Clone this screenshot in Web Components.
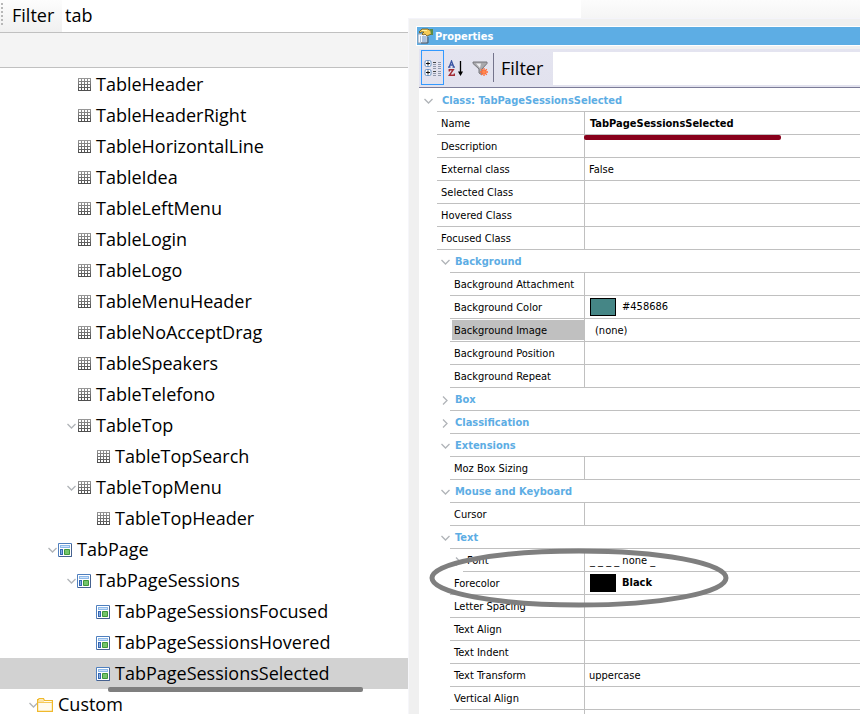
<!DOCTYPE html>
<html lang="en">
<head>
<meta charset="utf-8">
<title>Class Properties</title>
<style>
html, body { margin: 0; height: 100%; background: #fff; color: #000; }
body { font-family: "Open Sans", "Noto Sans", sans-serif; font-size: 18px; overflow: hidden; }
</style>
</head>
<body>
<app-shell>
  <class-tree slot="left"></class-tree>
  <property-panel slot="right" heading="Properties"></property-panel>
</app-shell>

<template id="t-shell">
  <style>
    :host { display: grid; grid-template-columns: minmax(0, 408fr) minmax(0, 452fr); height: 100vh; overflow: hidden; }
    .right { display: flex; flex-direction: column; min-width: 0; min-height: 0; }
    .left { min-width: 0; min-height: 0; overflow: hidden; }
    .strip { display: grid; grid-template-columns: 173fr 279fr; height: 18px; flex: none; }
    .strip i:last-child { background: linear-gradient(#fcfcfc, #f5f5f5); }
    ::slotted([slot=right]) { flex: 1; }
  </style>
  <div class="left"><slot name="left"></slot></div>
  <div class="right"><div class="strip"><i></i><i></i></div><slot name="right"></slot></div>
</template>

<template id="t-tree">
  <style>
    :host { display: block; }
    .bar { display: flex; height: 32px; border-bottom: 1px solid #c0c0c0; }
    .lab { box-sizing: border-box; width: 62px; display: flex; align-items: center; gap: 9px; padding: 0 0 2px 1px; background: linear-gradient(#fdfdfd, #f0f0f0); }
    .grip { width: 2px; height: 22px; margin-bottom: 2px; background: repeating-linear-gradient(#b8b8b8 0 2px, transparent 2px 4px); }
    input { flex: 1; min-width: 0; border: 0; outline: 0; padding: 0 0 2px 3px; margin: 0; font: inherit; color: #000; background: #fff; }
    .band { height: 34px; background: #f4f4f4; border-bottom: 1px solid #c0c0c0; }
    .rows { padding-top: 1px; }
  </style>
  <div class="bar">
    <label class="lab" for="f"><span class="grip"></span>Filter</label>
    <input id="f" type="text" value="tab">
  </div>
  <div class="band"></div>
  <div class="rows" role="tree" aria-label="Classes"></div>
</template>

<template id="t-item">
  <style>
    :host { display: flex; align-items: center; position: relative; height: 31px; white-space: nowrap; }
    :host([selected]) { background: #d2d2d2; }
    button { width: 9px; height: 15px; margin-right: 1px; padding: 0; border: 0; background: none; display: flex; align-items: center; flex: none; }
    button[hidden] { display: flex; visibility: hidden; }
    .ico { display: flex; width: 14px; margin-right: 5px; flex: none; justify-content: flex-end; }
    .txt { line-height: 20px; margin-bottom: 2px; }
    svg { display: block; flex: none; }
    .mark { position: absolute; left: 108px; bottom: -3px; width: 255px; height: 5px; border-radius: 2px; background: #7f7f7f; z-index: 1; }
  </style>
  <button type="button" aria-label="Collapse"><svg width="9" height="6"><path d="M.5 1l4 4 4-4" fill="none" stroke="#b0b4b8" stroke-width="1.3"/></svg></button>
  <span class="ico"></span><span class="txt"><slot></slot></span>
</template>

<template id="t-panel">
  <style>
    :host { display: flex; flex-direction: column; position: relative; min-height: 0; box-sizing: border-box; background: #f0f0f0; border-left: 1px solid #f6f6fa; border-top: 1px solid #f4f4fa; padding: 7px 0 0 7px; font: 11px "DejaVu Sans Condensed", "DejaVu Sans", sans-serif; overflow: hidden; }
    .title { display: flex; align-items: center; gap: 2px; height: 18px; flex: none; background: #5dade4; border: solid #fff; border-width: 1px 0 1px 1px; margin-bottom: 3px; color: #fff; font-weight: bold; }
    h2 { font: inherit; margin: 0; }
    .body { flex: 1; min-height: 0; margin-left: 3px; background: #fff; overflow: hidden; }
    .tools { box-sizing: border-box; display: flex; height: 39px; padding: 1px 0 2px 2px; background: linear-gradient(#e4e4f0, #e2e2ee); border-bottom: 1px solid #7c7c98; }
    .tools button { box-sizing: border-box; width: 23px; padding: 2px 0 0; border: 1px solid transparent; background: none; display: flex; align-items: center; justify-content: center; flex: none; margin-right: 1px; }
    .tools button[aria-pressed=true] { border-color: #3399ff; }
    .sep { width: 1px; background: #74748c; margin: 3px 7px 3px 0; }
    .tools label { font: 18px "Open Sans", "Noto Sans", sans-serif; align-self: center; width: 52px; }
    input { flex: 1; min-width: 0; border: 0; outline: 0; padding: 0 4px; margin: 2px 0 0; background: #fff; }
    table { width: 100%; border-collapse: separate; border-spacing: 0; table-layout: fixed; margin-top: 1px; }
    col.a { width: 18px; } col.b { width: 13px; } col.n { width: 121px; }
    th, td { height: 20px; padding: 2px 0 0; text-align: left; font-weight: normal; border-bottom: 1px solid #c0c0c0; white-space: nowrap; line-height: 20px; }
    th { line-height: 20px; }
    .g { border-bottom-color: transparent; }
    .g button { display: flex; align-items: center; justify-content: center; width: 10px; height: 20px; padding: 0; margin: 0 0 0 auto; border: 0; background: none; }
    tr.top .g button { margin-right: 4px; }
    .k { padding-left: 4px; }
    th.sec { font-weight: bold; color: #5dade4; padding-left: 5px; }
    td.v { border-left: 1px solid #c0c0c0; padding-left: 4px; position: relative; }
    tr.sel .k { background: linear-gradient(#c0c0c0, #c0c0c0) 2px 1px / 100% 20px no-repeat; }
    .v.in { padding-left: 10px; }
    .v.b { font-weight: bold; padding-left: 5px; }
    .v.sw { padding-left: 5px; }
    .fill { display: flex; align-items: center; gap: 6px; height: 20px; margin-top: -2px; }
    .chip { box-sizing: border-box; width: 26px; height: 18px; border: 1px solid #000; }
    .red { position: absolute; left: -1px; bottom: -6px; width: 197px; height: 5px; border-radius: 2px; background: #88001b; z-index: 1; }
    .ring { position: absolute; left: -155px; top: -24px; z-index: 2; pointer-events: none; overflow: visible; }
    svg { display: block; }
  </style>
  <div class="title">
    <svg width="16" height="16" viewBox="0 0 16 16"><path d="M1 6h9v9H1z" fill="#f4f7fb" stroke="#8a9cb4"/><path d="M3 9h1M5 9h4M3 11h1M5 11h4M3 13h1M5 13h4" stroke="#5b87bd"/><path d="M2 4l3-3h6l1 1h3v4l-3 1-2 1-2-2-2 1-1-1 2-2H4L3 5z" fill="#f6cc55" stroke="#6f5518" stroke-width=".8"/><path d="M5 2.500h5" stroke="#fff0a0"/><path d="M13 1h3v6h-2z" fill="#5a8c46"/><path d="M11 9v6H4" fill="none" stroke="#4e5a68"/></svg>
    <h2></h2>
  </div>
  <div class="body">
    <div class="tools">
      <button type="button" aria-label="Categorized" aria-pressed="true"><svg width="17" height="17" viewBox="0 0 17 17" fill="none"><rect x="1" y=".5" width="6" height="6" rx="1.500" fill="#fff" stroke="#6c95c4"/><path d="M2 3.500h4M4 1.500v4" stroke="#111"/><rect x="1" y="9.500" width="6" height="6" rx="1.500" fill="#fff" stroke="#6c95c4"/><path d="M2 12.500h4M4 10.500v4" stroke="#111"/><path d="M9 2.500h3M9 11.500h3" stroke="#444"/><path d="M9 4.500h3M9 6.500h3M9 8.500h3M9 13.500h3M9 15.500h3M14 2.500h3M14 4.500h3M14 6.500h3M14 8.500h3M14 11.500h3M14 13.500h3M14 15.500h3" stroke="#8f98ab"/></svg></button>
      <button type="button" aria-label="Alphabetical"><svg width="17" height="17" viewBox="0 0 17 17" fill="none"><path d="M0 7.200h2.500M4.500 7.200H7M1.200 7L3.500 1l2.300 6M2 5h3" stroke="#3a55a4" stroke-width="1.300"/><path d="M1.300 11.500V9.700h4L1.300 15.300h5v-1.800" stroke="#a32c34" stroke-width="1.400"/><path d="M12.500 1v13" stroke="#000" stroke-width="1.300"/><path d="M10 11.500h5L12.500 16z" fill="#000"/></svg></button>
      <button type="button" aria-label="Clear filter"><svg width="17" height="17" viewBox="0 0 17 17"><path d="M1 2h14v1.500L10 9v6l-3-2V9L1 3.500z" fill="#a9a9ad" stroke="#77777c"/><path d="M4 3.500h5L8 8z" fill="#ececf0"/><path d="M12 8v8M8 12h8M9.200 9.200l5.600 5.600M14.800 9.200l-5.600 5.600" stroke="#ff6a36" stroke-width="1.300"/><circle cx="12" cy="12" r="1.700" fill="#ff8a50"/></svg></button>
      <span class="sep"></span>
      <label for="pf">Filter</label><input id="pf" type="text">
    </div>
    <table aria-label="Class properties"><colgroup><col class="a"><col class="b"><col class="b"><col class="n"><col></colgroup><tbody></tbody></table>
  </div>
</template>

<script>
const stamp = (el, id) => {
  const root = el.attachShadow({ mode: 'open' });
  root.append(document.getElementById(id).content.cloneNode(true));
  return root;
};

const GRID = '<svg width="13" height="13" viewBox="0 0 13 13"><defs><linearGradient id="g" x2="0" y2="1"><stop stop-color="#999"/><stop offset="1" stop-color="#4c4c4c"/></linearGradient></defs><path fill="url(#g)" fill-rule="evenodd" d="M0 0h13v13H0z' +
  [1, 4, 7, 10].flatMap(y => [1, 4, 7, 10].map(x => `M${x} ${y}h2v2h-2z`)).join('') + '"/></svg>';
const ICONS = {
  table: GRID,
  page: '<svg width="14" height="14" viewBox="0 0 14 14"><path d="M.5.5h13v13H.5z" fill="#fff" stroke="#4f7fbe"/><path d="M1 13.500h12.500V1" fill="none" stroke="#46618f"/><path d="M2 2h10v3H2z" fill="#8db9ea"/><path d="M3 3.500h8" stroke="#cfe3fa"/><path d="M2 6h3v6H2z" fill="#3465b0"/><path d="M3.500 7v4" stroke="#86aee4"/><path d="M6.500 6.500h5v5h-5z" fill="#74c46a" stroke="#3d963b"/></svg>',
  folder: '<svg width="16" height="14" viewBox="0 0 16 14"><path d="M.6 13.400V1.500h1L2 .600h4.500l1 1.900h7.900v10.900z" fill="#fffbee" stroke="#f0b92c" stroke-width="1.200"/><path d="M1 4.500h14M1 3h6" stroke="#f6ca58"/></svg>'
};

customElements.define('app-shell', class extends HTMLElement {
  constructor() { super(); stamp(this, 't-shell'); }
});

customElements.define('tree-item', class extends HTMLElement {
  connectedCallback() {
    if (this.shadowRoot) return;
    const root = stamp(this, 't-item');
    this.setAttribute('role', 'treeitem');
    this.style.paddingLeft = 10 + 19 * Number(this.getAttribute('level')) + 'px';
    root.querySelector('button').hidden = !this.hasAttribute('open');
    root.querySelector('.ico').innerHTML = ICONS[this.getAttribute('icon')];
    if (this.hasAttribute('selected')) {
      const m = document.createElement('span');
      m.className = 'mark';
      root.append(m);
    }
  }
});

const TREE = [
  [3, 'table', 'TableHeader'], [3, 'table', 'TableHeaderRight'], [3, 'table', 'TableHorizontalLine'],
  [3, 'table', 'TableIdea'], [3, 'table', 'TableLeftMenu'], [3, 'table', 'TableLogin'], [3, 'table', 'TableLogo'],
  [3, 'table', 'TableMenuHeader'], [3, 'table', 'TableNoAcceptDrag'], [3, 'table', 'TableSpeakers'],
  [3, 'table', 'TableTelefono'], [3, 'table', 'TableTop', 'open'], [4, 'table', 'TableTopSearch'],
  [3, 'table', 'TableTopMenu', 'open'], [4, 'table', 'TableTopHeader'], [2, 'page', 'TabPage', 'open'],
  [3, 'page', 'TabPageSessions', 'open'], [4, 'page', 'TabPageSessionsFocused'],
  [4, 'page', 'TabPageSessionsHovered'], [4, 'page', 'TabPageSessionsSelected', 'selected'],
  [1, 'folder', 'Custom', 'open']
];
customElements.define('class-tree', class extends HTMLElement {
  constructor() {
    super();
    stamp(this, 't-tree').querySelector('.rows').innerHTML = TREE.map(([l, i, t, f = '']) =>
      `<tree-item level="${l}" icon="${i}" ${f}>${t}</tree-item>`).join('');
  }
});

const DOWN = '<svg width="9" height="6"><path d="M.5 1l4 4 4-4" fill="none" stroke="#b0b4b8" stroke-width="1.3"/></svg>';
const RIGHT = '<svg width="6" height="9"><path d="M1 .5l4 4-4 4" fill="none" stroke="#b0b4b8" stroke-width="1.3"/></svg>';
const tw = open => `<button type="button" aria-label="${open ? 'Collapse' : 'Expand'}">${open ? DOWN : RIGHT}</button>`;
const g = (n, inner = '') => '<td class="g"></td>'.repeat(n - 1) + `<td class="g">${inner}</td>`;
const top1 = t => `<tr class="top">${g(1, tw(true))}<th class="sec" colspan="4">${t}</th></tr>`;
const sec = (t, open = true) => `<tr>${g(2, tw(open))}<th class="sec" colspan="3">${t}</th></tr>`;
const row = (lvl, k, v = '', c = '', rc = '') =>
  `<tr class="${rc}">${g(lvl, lvl === 3 ? tw(false) : '')}<th class="k" scope="row" colspan="${4 - lvl}">${k}</th><td class="v ${c}">${v}</td></tr>`;
const chip = (c, t) => `<span class="fill"><span class="chip" style="background:${c}"></span>${t}</span>`;
const RING = '<svg class="ring" width="298" height="60" viewBox="0 0 298 60" aria-hidden="true"><ellipse cx="149" cy="30" rx="147" ry="27" fill="none" stroke="#7f7f7f" stroke-width="5"/></svg>';
customElements.define('property-panel', class extends HTMLElement {
  connectedCallback() {
    if (this.shadowRoot) return;
    const root = stamp(this, 't-panel');
    root.querySelector('h2').textContent = this.getAttribute('heading');
    root.querySelector('tbody').innerHTML = [
      top1('Class: TabPageSessionsSelected'),
      row(1, 'Name', 'TabPageSessionsSelected<span class="red"></span>', 'b'),
      row(1, 'Description'), row(1, 'External class', 'False'), row(1, 'Selected Class'),
      row(1, 'Hovered Class'), row(1, 'Focused Class'),
      sec('Background'),
      row(2, 'Background Attachment'), row(2, 'Background Color', chip('#458686', '#458686'), 'sw'),
      row(2, 'Background Image', '(none)', 'in', 'sel'), row(2, 'Background Position'), row(2, 'Background Repeat'),
      sec('Box', false), sec('Classification', false), sec('Extensions'),
      row(2, 'Moz Box Sizing'),
      sec('Mouse and Keyboard'), row(2, 'Cursor'),
      sec('Text'),
      row(3, 'Font', '_ _ _ _ none _', 'sw'),
      row(2, 'Forecolor', chip('#000', 'Black') + RING, 'b'),
      row(2, 'Letter Spacing'), row(2, 'Text Align'), row(2, 'Text Indent'),
      row(2, 'Text Transform', 'uppercase'), row(2, 'Vertical Align'), row(2, '')
    ].join('');
  }
});
</script>
</body>
</html>
